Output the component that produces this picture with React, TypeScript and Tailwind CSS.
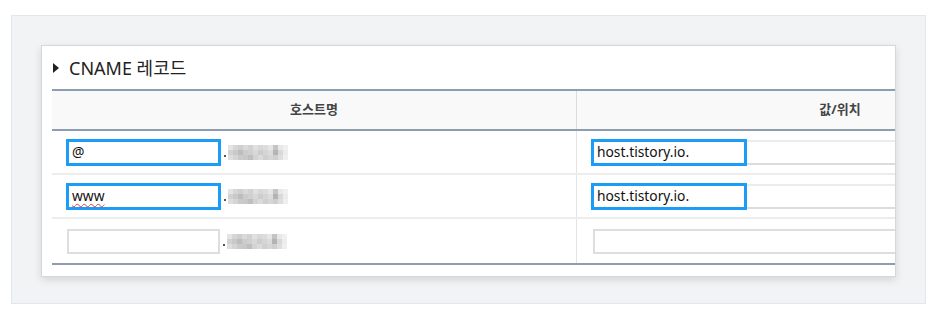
const font = { fontFamily: '"Noto Sans", "Noto Sans CJK KR", sans-serif' };

const mosaic = [
  ["#e4e4e4", "#d6d6d6", "#cfcfcf", "#dadada", "#d2d2d2", "#e0e0e0", "#d8d8d8", "#dcdcdc", "#e6e6e6", "#c4c4c4", "#e8e8e8", "#f0f0f0"],
  ["#d2d2d2", "#c9c9c9", "#bdbdbd", "#cccccc", "#d0d0d0", "#d8d8d8", "#cdcdcd", "#d5d5d5", "#dcdcdc", "#b4b4b4", "#d9d9d9", "#ececec"],
  ["#dedede", "#d4d4d4", "#cacaca", "#c8c8c8", "#bfbfbf", "#d3d3d3", "#dbdbdb", "#d0d0d0", "#d6d6d6", "#cfcfcf", "#dedede", "#efefef"],
];

const rows = [
  { host: "@", value: "host.tistory.io.", active: true, typo: false },
  { host: "www", value: "host.tistory.io.", active: true, typo: true },
  { host: "", value: "", active: false, typo: false },
];

function Mosaic() {
  return (
    <div className="flex items-end gap-[2px]">
      <span className="mb-[3px] h-[2px] w-[2px] bg-[#555]" />
      <div className="flex flex-col">
        {mosaic.map((line, r) => (
          <div key={r} className="flex">
            {line.map((c, i) => (
              <span key={i} className="h-[5px] w-[5px]" style={{ background: c }} />
            ))}
          </div>
        ))}
      </div>
    </div>
  );
}

export default function App() {
  return (
    <div className="h-[310px] w-[937px] overflow-hidden bg-white pl-[11px] pt-[15px]" style={font}>
      <div className="h-[289px] w-[915px] border border-[#e2e6ed] bg-[#f2f3f5] pl-[29px] pt-[29px]">
        <div className="h-[232px] w-[855px] overflow-hidden border border-[#d3d8df] bg-white shadow-[0_3px_8px_rgba(0,0,0,0.12)]">
          <div className="flex h-[43px] items-center gap-[10px] pl-[11px] pt-[1px] text-[18px] text-[#222]">
            <span className="h-0 w-0 border-y-[5px] border-l-[6px] border-y-transparent border-l-[#222]" />
            <span>CNAME 레코드</span>
          </div>
          <div className="ml-[10px] w-[1051px] border-y-2 border-[#8f9db0]">
            <div className="grid h-[40px] grid-cols-[525px_526px] border-b-2 border-[#8f9db0] bg-[#f9f9f9] text-[13px] font-bold text-[#444]">
              <div className="flex items-center justify-center border-r border-[#dcdcdc]">호스트명</div>
              <div className="flex items-center justify-center">값/위치</div>
            </div>
            {rows.map((row, i) => (
              <div
                key={i}
                className={`grid h-[44px] grid-cols-[525px_526px] text-[13.8px] text-[#111] ${i < 2 ? "border-b-2 border-[#ececec]" : ""}`}
              >
                <div className="flex items-center gap-[3px] border-r border-[#e3e3e3] pl-[14px] pt-[1px]">
                  {row.active ? (
                    <div className="flex h-[27px] w-[155px] items-center border-[3px] border-[#1a9cf7] px-[3px]">
                      <span className={row.typo ? "underline decoration-[#e03a3a] decoration-wavy decoration-1 underline-offset-2" : ""}>{row.host}</span>
                    </div>
                  ) : (
                    <div className="ml-[1px] h-[25px] w-[153px] border-2 border-[#dedede]" />
                  )}
                  <Mosaic />
                </div>
                <div className="flex items-center pl-[14px] pt-[1px]">
                  {row.active ? (
                    <div className="flex h-[27px] w-[500px] items-center">
                      <div className="flex h-[27px] w-[156px] shrink-0 items-center border-[3px] border-[#1a9cf7] px-[3px]">
                        {row.value}
                      </div>
                      <div className="h-[25px] flex-1 border-y-2 border-t-[#ececec] border-b-[#dcdcdc]" />
                    </div>
                  ) : (
                    <div className="ml-[2px] h-[25px] w-[500px] border-2 border-[#dedede]" />
                  )}
                </div>
              </div>
            ))}
          </div>
        </div>
      </div>
    </div>
  );
}
